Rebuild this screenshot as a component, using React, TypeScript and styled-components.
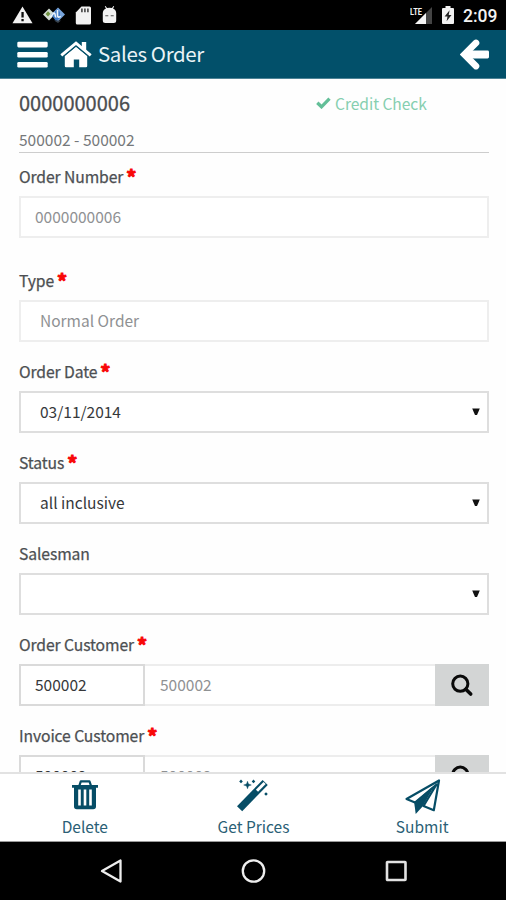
import React from "react";
import styled, { createGlobalStyle, css } from "styled-components";

const TEAL = "#02506a";
const ICON_TEAL = "#064d66";

const GlobalStyle = createGlobalStyle`
  * { box-sizing: border-box; }
  body {
    margin: 0;
    background: #fff;
    font-family: "Noto Sans CJK SC", "Noto Sans", sans-serif;
  }
`;

const Screen = styled.div`
  display: flex;
  flex-direction: column;
  width: 506px;
  height: 900px;
  overflow: hidden;
  background: #fefefe;
`;

const StatusBar = styled.div`
  display: flex;
  align-items: center;
  justify-content: space-between;
  flex: none;
  height: 30px;
  padding: 0 8px 0 12px;
  background: #000;
`;

const StatusGroup = styled.div`
  display: flex;
  align-items: center;
  height: 30px;
`;

const Clock = styled.span`
  width: 35px;
  font: 500 17.5px/30px Roboto, sans-serif;
  color: #f2f2f2;
  white-space: nowrap;
  padding-top: 2px;
`;

const Header = styled.header`
  display: flex;
  align-items: center;
  flex: none;
  height: 49px;
  padding: 0 16px 0 17px;
  background: ${TEAL};
  border-bottom: 1px solid #4d8396;
`;

const HeaderTitle = styled.h1`
  flex: 1;
  margin: -2px 0 0 6px;
  font-size: 20.5px;
  font-weight: 400;
  line-height: 30px;
  letter-spacing: -0.38px;
  color: #e9f3f6;
`;

const Content = styled.main`
  flex: 1;
  min-height: 0;
  overflow: hidden;
  padding: 10px 17px 0 19px;
`;

const OrderSummary = styled.section`
  height: 64px;
  margin-bottom: 14px;
  border-bottom: 1px solid #cdcdcd;
`;

const SummaryRow = styled.div`
  display: flex;
  align-items: center;
  height: 28px;
`;

const OrderNumber = styled.div`
  width: 297px;
  font-size: 20px;
  line-height: 28px;
  color: #4a4d50;
  -webkit-text-stroke: 0.3px #4a4d50;
`;

const CreditCheck = styled.div`
  display: flex;
  align-items: center;
  gap: 4px;
  font-size: 15.6px;
  line-height: 28px;
  letter-spacing: -0.05px;
  color: #86cfb0;
`;

const CustomerLine = styled.div`
  margin-top: 11px;
  font-size: 15.5px;
  line-height: 22px;
  color: #75787a;
`;

const Field = styled.div<{ $gap?: number }>`
  margin-bottom: ${(p) => p.$gap ?? 20}px;
`;

const Label = styled.label`
  display: flex;
  height: 20px;
  margin-bottom: 9px;
  font-size: 15.7px;
  line-height: 20px;
  letter-spacing: -0.1px;
  color: #4c4f52;
  -webkit-text-stroke: 0.25px #4c4f52;
  white-space: pre;
`;

const Required = styled.span`
  margin-left: 3px;
  font-size: 20px;
  font-weight: 700;
  line-height: 20px;
  color: #f80808;
  -webkit-text-stroke: 1.1px #f80808;
`;

const controlBox = css`
  display: flex;
  align-items: center;
  height: 42px;
  background: #fff;
  font-size: 15.5px;
  line-height: 24px;
  padding-bottom: 2px;
`;

const Control = styled.div<{ $disabled?: boolean; $inset?: number }>`
  ${controlBox}
  justify-content: space-between;
  padding-right: 7px;
  padding-left: ${(p) => p.$inset ?? 19}px;
  border: 2px solid ${(p) => (p.$disabled ? "#eeeeee" : "#dedede")};
  color: ${(p) => (p.$disabled ? "#8f9193" : "#36383a")};
`;

const LookupRow = styled.div`
  display: flex;
`;

const CodeInput = styled.div`
  ${controlBox}
  width: 126px;
  padding-left: 14px;
  border: 2px solid #dadada;
  color: #36383a;
`;

const NameInput = styled.div`
  ${controlBox}
  flex: 1;
  padding-left: 15px;
  border: solid #ededed;
  border-width: 2px 0;
  color: #8f9193;
`;

const SearchButton = styled.div`
  display: flex;
  align-items: center;
  justify-content: center;
  width: 54px;
  height: 42px;
  background: #d3d5d5;
`;

const ActionBar = styled.footer`
  display: grid;
  grid-template-columns: repeat(3, 1fr);
  flex: none;
  height: 70px;
  background: #fff;
  border-top: 2px solid #e2e2e2;
  border-bottom: 1px solid #9a9a9a;
`;

const Action = styled.div`
  display: flex;
  flex-direction: column;
  align-items: center;
  padding: 4px 0 0 1px;
  font-size: 15.5px;
  line-height: 22px;
  color: #2b5f76;
`;

const ActionIcon = styled.div`
  display: flex;
  height: 37px;
`;

const NavBar = styled.nav`
  display: flex;
  align-items: center;
  justify-content: space-between;
  flex: none;
  height: 58px;
  padding: 0 98px 0 99px;
  background: #000;
`;

const WarningIcon = () => (
  <svg width="21" height="18" viewBox="0 0 21 18">
    <path d="M10.5 0.5 20.5 17.3H0.5z" fill="#f2f2f2" />
    <path d="M9.4 6h2.3v5.6H9.4zM9.4 13h2.3v2.2H9.4z" fill="#111" />
  </svg>
);

const SyncIcon = () => (
  <svg width="22" height="18" viewBox="0 0 22 18">
    <path d="M6 2.5 12 8.5 6 14.5 0 8.5z" fill="#d3ddd3" />
    <path d="M5 5.2 7.4 7.8 5 10.6 2.6 8z" fill="#6f9340" />
    <path d="M15 1.5 22 8.5 15 15.5 8 8.5z" fill="#78a5dc" />
    <path d="M14 3 17 6v6l-4 3-4-5z" fill="#3e79c4" />
    <path d="M7 11c2-.3 2.600-4 4.200-3.900s.3 4.200 2.200 3.900M14.500 4v5.500c0 2 2 2 3 .8" fill="none" stroke="#eef4fa" strokeWidth="1.6" />
    <path d="M11 14.500h7l-3 2.500z" fill="#38434f" />
  </svg>
);

const SdCardIcon = () => (
  <svg width="17" height="19" viewBox="0 0 17 19">
    <path d="M6.500 .5H14.500Q16 .5 16 2V17Q16 18.500 14.500 18.500H2.300Q.8 18.500.8 17V6.500z" fill="#f2f2f2" />
    <path d="M6 2.500h1.800v3.700H6zM9 2.500h1.800v3.700H9zM12 2.500h1.800v3.700H12z" fill="#555" />
  </svg>
);

const AndroidIcon = () => (
  <svg width="15" height="18" viewBox="0 0 15 18">
    <path d="M.8 8h13.400v6.500q0 2.500-2.500 2.500H3.300Q.8 17 .8 14.500zM.8 7Q1 3.500 4 2.400L2.800.6 3.600 0 5 2q2.500-.7 5 0L11.400 0l.8.600L11 2.400Q14 3.500 14.200 7v2H.8z" fill="#f2f2f2" />
    <path d="M3.300 9.200h3v1.100h-3zM8.700 9.200h3v1.100h-3z" fill="#555" />
  </svg>
);

const SignalText = styled.text`
  font: 700 9.5px Roboto, sans-serif;
  fill: #f2f2f2;
`;

const SignalIcon = () => (
  <svg width="23" height="19" viewBox="0 0 23 19">
    <path d="M22 1V18H5z" fill="#444" />
    <path d="M16 7V18H5z" fill="#f4f4f4" />
    <path d="M0 0h12.500v9H0z" fill="#000" />
    <SignalText x="0" y="8.500" textLength="12" lengthAdjust="spacingAndGlyphs">LTE</SignalText>
  </svg>
);

const BatteryIcon = () => (
  <svg width="12" height="18" viewBox="0 0 12 18">
    <path d="M3.500 0h5v2H11q1 0 1 1v14q0 1-1 1H1q-1 0-1-1V3q0-1 1-1h2.500z" fill="#f2f2f2" />
    <path d="M7.600 4.200 2.600 10.500H5.500L4.600 15.300 9.500 8.900H6.700z" fill="#222" />
  </svg>
);

const MenuIcon = () => (
  <svg width="31" height="27" viewBox="0 0 31 27" fill="#fff">
    <rect x=".3" y=".8" width="30.400" height="5.600" rx="1.300" />
    <rect x=".3" y="11" width="30.400" height="5.500" rx="1.300" />
    <rect x=".3" y="21" width="30.400" height="5.600" rx="1.300" />
  </svg>
);

const HomeIcon = () => (
  <svg width="32" height="27" viewBox="0 0 32 27">
    <path d="M4.800 15 16 5.700 27.200 15V25q0 1.200-1.200 1.200H19.200V18.500h-5.400V26.200H6q-1.200 0-1.200-1.200z" fill="#fff" />
    <path d="M21.800 1h4.400v9.700l-4.400-3.700z" fill="#fff" />
    <path d="M1.300 14.300 16 2.200 30.700 14.300" fill="none" stroke="#fff" strokeWidth="2.900" />
    <path d="M3.400 15.500 16 5.200 28.600 15.500" fill="none" stroke={TEAL} strokeWidth=".8" />
  </svg>
);

const BackIcon = () => (
  <svg width="30" height="31" viewBox="0 0 30 31" fill="none" stroke="#fff">
    <path d="M16 3.900 4.400 15.500 16 27.100" strokeWidth="6.600" strokeLinecap="round" />
    <path d="M5 11.500H27.600q1.400 0 1.400 1.400v5.200q0 1.400-1.400 1.400H5z" fill="#fff" stroke="none" />
  </svg>
);

const CheckIcon = () => (
  <svg width="15" height="12" viewBox="0 0 15 12">
    <path d="M1.300 5.800 5.500 9.800 13.500 1.700" fill="none" stroke="#63bf98" strokeWidth="3.300" />
  </svg>
);

const CaretIcon = () => (
  <svg width="8" height="8" viewBox="0 0 8 8">
    <path d="M.2 1.500H7.800L5 8H3z" fill="#111" />
  </svg>
);

const SearchIcon = () => (
  <svg width="24" height="24" viewBox="0 0 24 24" fill="none" stroke="#0a0a0a">
    <circle cx="10.300" cy="10.700" r="7.600" strokeWidth="3" />
    <path d="M15.800 16.200 20.700 21" strokeWidth="3.600" strokeLinecap="round" />
  </svg>
);

const TrashIcon = () => (
  <svg width="28" height="33" viewBox="0 0 28 33">
    <g transform="translate(0 1)">
      <path d="M8.300 6.800 9.800 2.400H18.500L20 6.800" fill="none" stroke={ICON_TEAL} strokeWidth="2.200" strokeLinejoin="round" />
      <path d="M1 6H27V8.800H25V27.500Q25 30.300 22.200 30.300H5.800Q3 30.300 3 27.500V8.800H1z" fill={ICON_TEAL} />
      <path d="M7.200 10.500h2.600V26.500H7.200zM12.700 10.500h2.600V26.500h-2.600zM18.200 10.500h2.600V26.500h-2.600z" fill="#fff" />
    </g>
  </svg>
);

const WandIcon = () => (
  <svg width="34" height="35" viewBox="0 0 34 35">
    <path d="M3.600 30.700 29.200 4.400" stroke={ICON_TEAL} strokeWidth="7.200" />
    <path d="M21 12.800 28.600 5" stroke="#fff" strokeWidth="3" />
    <path d="M11.500 3.200 12.500 6 15.300 7 12.500 8 11.500 10.800 10.500 8 7.700 7 10.500 6z" fill={ICON_TEAL} stroke={ICON_TEAL} strokeWidth=".4" />
    <path d="M5 1.600 6.800 3.400 5 5.200 3.200 3.400zM17.500 1.600 19.300 3.400 17.500 5.200 15.700 3.400zM30 14.200 31.800 16 30 17.800 28.200 16z" fill={ICON_TEAL} />
  </svg>
);

const PlaneIcon = () => (
  <svg width="37" height="37" viewBox="0 0 37 37">
    <path d="M2.500 21 35 2.500 29.800 32.200 19.500 28 32.500 6.500 11 24.500z" fill="none" stroke={ICON_TEAL} strokeWidth="2.200" strokeLinejoin="round" />
    <path d="M28 9.500 10.200 24.400 11.700 36 18.600 28.500 28 12z" fill={ICON_TEAL} />
  </svg>
);

const NavBackIcon = () => (
  <svg width="24" height="26" viewBox="0 0 24 26">
    <path d="M3 13 21.500 2.500V23.500z" fill="none" stroke="#eee" strokeWidth="2.300" strokeLinejoin="round" />
  </svg>
);

const NavHomeIcon = () => (
  <svg width="26" height="26" viewBox="0 0 26 26">
    <circle cx="12.500" cy="13" r="10.700" fill="none" stroke="#eee" strokeWidth="2.300" />
  </svg>
);

const NavRecentIcon = () => (
  <svg width="24" height="24" viewBox="0 0 24 24">
    <rect x="3" y="3" width="18.500" height="18" rx=".5" fill="none" stroke="#e2e2e2" strokeWidth="2.600" />
  </svg>
);

const LeftStatus = styled(StatusGroup)`
  gap: 10px;
`;

const RightStatus = styled(StatusGroup)`
  gap: 9px;
`;

const HomeSlot = styled.div`
  display: flex;
  margin-left: 12px;
`;

type FieldLabelProps = { text: string; required?: boolean };

const FieldLabel = ({ text, required }: FieldLabelProps) => (
  <Label>
    {text}
    {required && <Required>*</Required>}
  </Label>
);

const SelectField = ({ label, value, required }: { label: string; value: string; required?: boolean }) => (
  <Field>
    <FieldLabel text={label} required={required} />
    <Control>
      <span>{value}</span>
      <CaretIcon />
    </Control>
  </Field>
);

const LookupField = ({ label, code, name }: { label: string; code: string; name: string }) => (
  <Field>
    <FieldLabel text={label} required />
    <LookupRow>
      <CodeInput>{code}</CodeInput>
      <NameInput>{name}</NameInput>
      <SearchButton>
        <SearchIcon />
      </SearchButton>
    </LookupRow>
  </Field>
);

export default function App() {
  return (
    <>
      <GlobalStyle />
      <Screen>
        <StatusBar>
          <LeftStatus>
            <WarningIcon />
            <SyncIcon />
            <SdCardIcon />
            <AndroidIcon />
          </LeftStatus>
          <RightStatus>
            <SignalIcon />
            <BatteryIcon />
            <Clock>2:09</Clock>
          </RightStatus>
        </StatusBar>
        <Header>
          <MenuIcon />
          <HomeSlot>
            <HomeIcon />
          </HomeSlot>
          <HeaderTitle>Sales Order</HeaderTitle>
          <BackIcon />
        </Header>
        <Content>
          <OrderSummary>
            <SummaryRow>
              <OrderNumber>0000000006</OrderNumber>
              <CreditCheck>
                <CheckIcon />
                <span>Credit Check</span>
              </CreditCheck>
            </SummaryRow>
            <CustomerLine>500002 - 500002</CustomerLine>
          </OrderSummary>
          <Field $gap={33}>
            <FieldLabel text="Order Number" required />
            <Control $disabled $inset={14}>0000000006</Control>
          </Field>
          <Field>
            <FieldLabel text="Type" required />
            <Control $disabled>Normal Order</Control>
          </Field>
          <SelectField label="Order Date" value="03/11/2014" required />
          <SelectField label="Status" value="all inclusive" required />
          <SelectField label="Salesman" value="" />
          <LookupField label="Order Customer" code="500002" name="500002" />
          <LookupField label="Invoice Customer" code="500002" name="500002" />
        </Content>
        <ActionBar>
          <Action>
            <ActionIcon><TrashIcon /></ActionIcon>
            Delete
          </Action>
          <Action>
            <ActionIcon><WandIcon /></ActionIcon>
            Get Prices
          </Action>
          <Action>
            <ActionIcon><PlaneIcon /></ActionIcon>
            Submit
          </Action>
        </ActionBar>
        <NavBar>
          <NavBackIcon />
          <NavHomeIcon />
          <NavRecentIcon />
        </NavBar>
      </Screen>
    </>
  );
}
